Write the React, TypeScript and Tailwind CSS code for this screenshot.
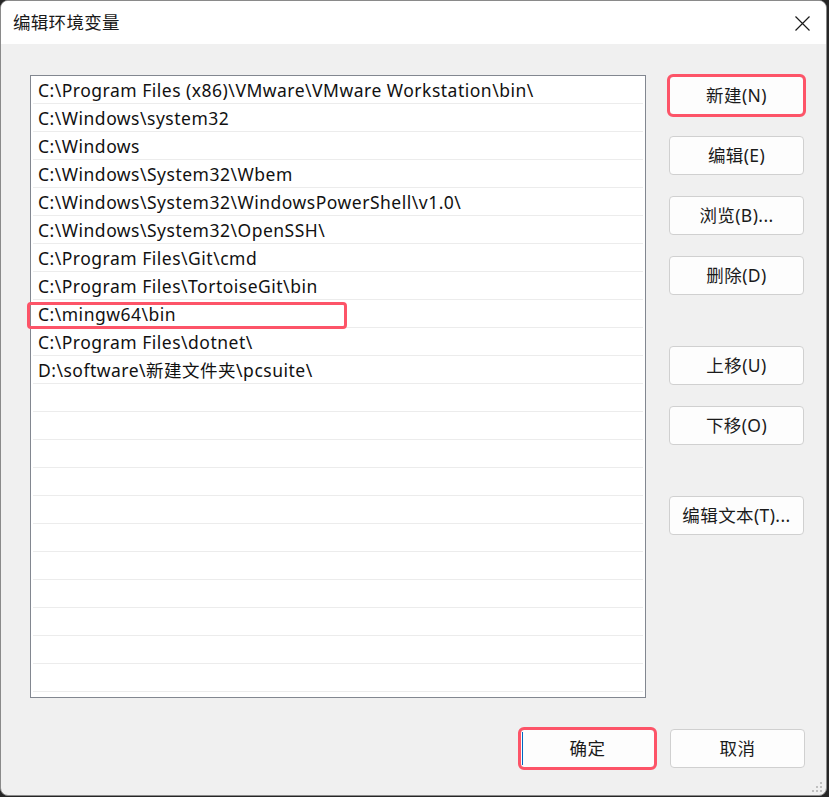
const paths = [
  'C:\\Program Files (x86)\\VMware\\VMware Workstation\\bin\\',
  'C:\\Windows\\system32',
  'C:\\Windows',
  'C:\\Windows\\System32\\Wbem',
  'C:\\Windows\\System32\\WindowsPowerShell\\v1.0\\',
  'C:\\Windows\\System32\\OpenSSH\\',
  'C:\\Program Files\\Git\\cmd',
  'C:\\Program Files\\TortoiseGit\\bin',
  'C:\\mingw64\\bin',
  'C:\\Program Files\\dotnet\\',
  'D:\\software\\新建文件夹\\pcsuite\\',
];

const rows = [...paths, ...Array(11).fill('')];

const font = "font-['Segoe_UI','Noto_Sans','Noto_Sans_CJK_SC',sans-serif]";

function Btn({ label, className = '', marked = false }: { label: string; className?: string; marked?: boolean }) {
  return (
    <button
      type="button"
      className={
        'relative flex h-[39px] w-[135px] items-center justify-center rounded-[4px] border border-[#d0d0d0] bg-[#fdfdfd] text-[17.5px] tracking-[0.4px] text-[#1b1b1b] ' +
        (marked ? 'outline outline-[3px] outline-offset-[-1px] outline-[#fd5468] ' : '') +
        className
      }
    >
      {label}
    </button>
  );
}

export default function App() {
  return (
    <div className={`h-[797px] w-[829px] bg-[#262626] ${font}`}>
      <div className="flex h-[796px] w-[827px] flex-col overflow-hidden rounded-[8px] border border-[#8a8a8a] bg-[#f0f0f0]">
        {/* title bar */}
        <div className="flex h-[43px] shrink-0 items-center justify-between bg-white pl-[12px] pr-[16px]">
          <span className="text-[17.5px] tracking-[0.3px] text-[#1a1a1a]">编辑环境变量</span>
          <svg width="15" height="15" viewBox="0 0 15 15" className="mt-[1px]">
            <path d="M0.5 0.5 L14.5 14.5 M14.5 0.5 L0.5 14.5" stroke="#1a1a1a" strokeWidth="1.2" />
          </svg>
        </div>

        <div className="flex flex-1 flex-col pl-[29px] pt-[31px]">
          <div className="flex">
            {/* path list */}
            <div className="h-[623px] w-[616px] border border-[#828790] bg-white">
              {rows.map((p, i) => (
                <div key={i} className="relative h-[28px] px-[1px]">
                  <div className="flex h-[27px] items-center pl-[6px] pt-[3px] text-[17.5px] leading-none tracking-[0.5px] text-[#111]">
                    {p}
                  </div>
                  <div className="mx-[1px] h-px bg-[#ececec]" />
                  {i === 8 && (
                    <div className="absolute left-[-4px] top-[2px] h-[27px] w-[320px] rounded-[4px] border-[3px] border-[#fd5468]" />
                  )}
                </div>
              ))}
            </div>

            {/* right buttons */}
            <div className="ml-[23px] flex flex-col pt-px">
              <Btn label="新建(N)" marked />
              <Btn label="编辑(E)" className="mt-[21px]" />
              <Btn label="浏览(B)..." className="mt-[21px]" />
              <Btn label="删除(D)" className="mt-[21px]" />
              <Btn label="上移(U)" className="mt-[51px]" />
              <Btn label="下移(O)" className="mt-[21px]" />
              <Btn label="编辑文本(T)..." className="mt-[51px]" />
            </div>
          </div>

          {/* bottom buttons */}
          <div className="mt-[31px] flex justify-end gap-[15px] pr-[21px]">
            <div className="relative">
              <Btn label="确定" marked />
              <span className="absolute left-[2px] top-[3px] h-[33px] w-px bg-[#0067c0]" />
            </div>
            <Btn label="取消" />
          </div>

          <div className="mt-auto flex justify-end pb-[3px] pr-[4px]">
            <svg width="10" height="10" viewBox="0 0 10 10">
              <rect x="8" y="0" width="2" height="2" fill="#c0c0c0" />
              <rect x="4" y="4" width="2" height="2" fill="#c0c0c0" />
              <rect x="8" y="4" width="2" height="2" fill="#c0c0c0" />
              <rect x="0" y="8" width="2" height="2" fill="#c0c0c0" />
              <rect x="4" y="8" width="2" height="2" fill="#c0c0c0" />
              <rect x="8" y="8" width="2" height="2" fill="#c0c0c0" />
            </svg>
          </div>
        </div>
      </div>
    </div>
  );
}
